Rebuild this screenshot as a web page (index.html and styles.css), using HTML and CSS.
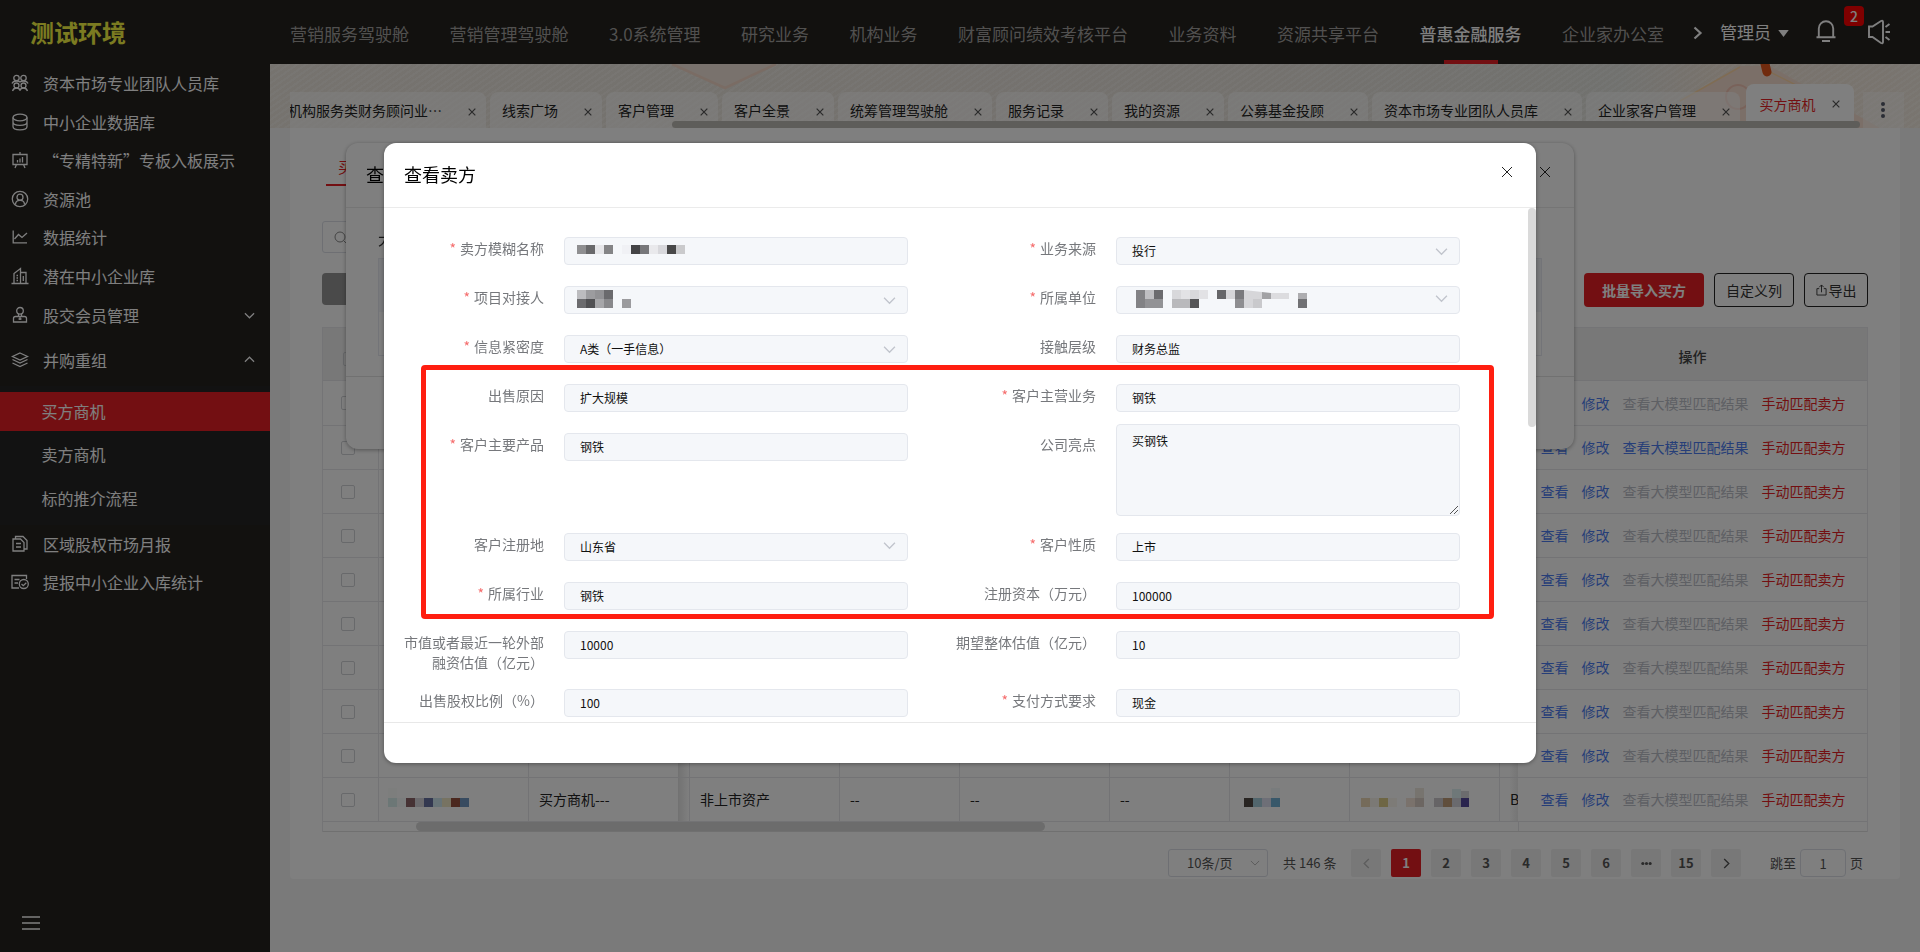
FILE: index.html
```html
<!DOCTYPE html>
<html lang="zh-CN">
<head>
<meta charset="utf-8">
<title>买方商机</title>
<link rel="stylesheet" href="styles.css">
</head>
<body>
<svg class="defs" width="0" height="0">
  <symbol id="x" viewBox="0 0 12 12"><path d="M1 1l10 10M11 1L1 11"/></symbol>
  <symbol id="down" viewBox="0 0 12 12"><path d="M1 3.5l5 5 5-5"/></symbol>
</svg>

<header class="header">
  <div class="logo">测试环境</div>
  <nav class="nav">
    <a>营销服务驾驶舱</a><a>营销管理驾驶舱</a><a>3.0系统管理</a><a>研究业务</a><a>机构业务</a><a>财富顾问绩效考核平台</a><a>业务资料</a><a>资源共享平台</a><a class="on">普惠金融服务</a><a>企业家办公室</a>
  </nav>
  <div class="tools">
    <svg class="nav-next" width="10" height="14" viewBox="0 0 10 14"><path d="M1.500 1.500L7.500 7l-6 5.500"/></svg>
    <span class="user">管理员</span>
    <svg class="caret" width="11" height="7" viewBox="0 0 12 8"><path d="M0 0h12L6 8z"/></svg>
    <span class="bell">
      <svg width="20" height="22" viewBox="0 0 20 22"><path d="M.5 17.300h19M2.800 17V8.500a7.200 7.200 0 0 1 14.400 0V17M6 21h8"/></svg>
      <b class="badge">2</b>
    </span>
    <svg class="speaker" width="24" height="26" viewBox="0 0 24 26"><path d="M2 7.500q0 0 3.500 0L14 2q2-1 2 1v20q0 2-2 1l-8.500-6H2zM18.500 8l4-3M18.500 13h4.500M18.500 18l4 3"/></svg>
  </div>
</header>

<div class="shell">
  <aside class="side">
    <div class="item"><svg viewBox="0 0 18 18"><circle cx="5.500" cy="4" r="2.700"/><circle cx="12.500" cy="4" r="2.700"/><circle cx="5.500" cy="11.500" r="2.500"/><circle cx="12.500" cy="11.500" r="2.500"/><path d="M1 9.500q1-2.500 4.500-2.500t3.500 1.500q0-1.500 3.500-1.500t4.500 2.500M1.500 17q1-3 4-3t3.500 2.500q.5-2.500 3.500-2.500t4 3"/></svg>资本市场专业团队人员库</div>
    <div class="item"><svg viewBox="0 0 18 18"><ellipse cx="9" cy="4.500" rx="7" ry="3.300"/><path d="M2 4.500v9c0 4.500 14 4.500 14 0v-9M2 9c0 4.500 14 4.500 14 0"/></svg>中小企业数据库</div>
    <div class="item"><svg viewBox="0 0 18 18"><path d="M2 3.500h14v10H2zM9 1v2.500M5.500 13.500L4 17M12.500 13.500L14 17M1.500 13.500h15M6.500 9v2.500M9 7.500v4M11.500 6v5.500"/></svg>“专精特新”专板入板展示</div>
    <div class="item"><svg viewBox="0 0 18 18"><circle cx="9" cy="9" r="7.700"/><circle cx="9" cy="7.200" r="3"/><path d="M4.500 14.500c0-5.500 9-5.500 9 0"/></svg>资源池</div>
    <div class="item"><svg viewBox="0 0 18 18"><path d="M2.200 2.500v12.300H16M3.500 11l4-4.500L11 9.500l5-4.500"/></svg>数据统计</div>
    <div class="item"><svg viewBox="0 0 18 18"><path d="M.5 16.500h17M3 16.500v-10l6.500-5v15M9.500 5.500h5.500v11M5.500 8.500h1.500M5.500 11h1.500M5.500 13.500h1.500M12.300 9v5"/></svg>潜在中小企业库</div>
    <div class="item h41"><svg viewBox="0 0 18 18"><circle cx="9" cy="4.800" r="3.300"/><path d="M2.500 16v-3.500q0-2 2-2h9q2 0 2 2v3.500zM7.500 8v2.500h3V8M9 10.500v3.500M7.500 13h3"/></svg>股交会员管理<svg class="arr" viewBox="0 0 12 12"><use href="#down"/></svg></div>
    <div class="item h49"><svg viewBox="0 0 18 18"><path d="M9 2l7.500 3.500L9 9 1.500 5.500zM1.500 8.500L9 12l7.500-3.500M1.500 12L9 15.500l7.500-3.500"/></svg>并购重组<svg class="arr up" viewBox="0 0 12 12"><use href="#down"/></svg></div>
    <div class="sub">
      <div class="leaf on">买方商机</div>
      <div class="leaf h48">卖方商机</div>
      <div class="leaf">标的推介流程</div>
    </div>
    <div class="item"><svg viewBox="0 0 18 18"><path d="M2 4h7.500l3.500 3.500V16H2zM4.500 4V1.500H12l4 4V14h-3M5 8.500h5M5 12h5"/></svg>区域股权市场月报</div>
    <div class="item"><svg viewBox="0 0 18 18"><path d="M8 15H1V2.500h14.500V6M3.500 6.500h5M3.500 10h3.500M1 15V2.500"/><circle cx="12.800" cy="11" r="4.500"/><path d="M10.500 11l1.800 1.700 3-3"/></svg>提报中小企业入库统计</div>
    <svg class="fold" width="18" height="14" viewBox="0 0 18 14"><path d="M0 1h18M0 7h18M0 13h18"/></svg>
  </aside>

  <main class="main">
    <div class="banner">
      <svg class="deco" width="1650" height="64" viewBox="0 0 1650 64">
        <path class="d1" d="M402 0h104l-51 24z"/><path class="d2" d="M402 0l53 24 51-24"/>
        <path class="d3" d="M1470 2L1415 34l-10 30h205L1500 2z"/>
        <path class="d4" d="M1470 3l-60 34M1500 8l80 40"/>
        <circle class="d5" cx="1468" cy="33" r="12"/>
        <path class="d6" d="M1495 0l2 8"/><path class="d7" d="M1433 62l30 2"/>
      </svg>
      <div class="tabs">
        <div class="tab first">机构服务类财务顾问业…<svg><use href="#x"/></svg></div>
        <div class="tab">线索广场<svg><use href="#x"/></svg></div>
        <div class="tab">客户管理<svg><use href="#x"/></svg></div>
        <div class="tab">客户全景<svg><use href="#x"/></svg></div>
        <div class="tab">统筹管理驾驶舱<svg><use href="#x"/></svg></div>
        <div class="tab">服务记录<svg><use href="#x"/></svg></div>
        <div class="tab">我的资源<svg><use href="#x"/></svg></div>
        <div class="tab">公募基金投顾<svg><use href="#x"/></svg></div>
        <div class="tab">资本市场专业团队人员库<svg><use href="#x"/></svg></div>
        <div class="tab">企业家客户管理<svg><use href="#x"/></svg></div>
        <div class="tab on">买方商机<svg><use href="#x"/></svg></div>
        <div class="more"><i></i><i></i><i></i></div>
      </div>
      <div class="tab-scroll"></div>
    </div>

    <section class="card">
      <div class="switch"><span>买方商机</span></div>
      <div class="search"><svg width="14" height="14" viewBox="0 0 14 14"><circle cx="6" cy="6" r="5"/><path d="M9.500 9.500L13 13"/></svg></div>
      <div class="bar">
        <button class="btn gray">删除</button>
        <span class="grow"></span>
        <button class="btn red">批量导入买方</button>
        <button class="btn line w80">自定义列</button>
        <button class="btn line w64"><svg width="11" height="12" viewBox="0 0 12 13"><path d="M3.500 5H1v7h10V5H8.500M6 9V1M3.500 3.500L6 1l2.500 2.500"/></svg>导出</button>
      </div>
      <div class="table">
        <div class="row head"><div class="chk"><i></i></div><div></div><div></div><div class="shade"></div><div></div><div></div><div></div><div></div><div></div><div></div><div class="edge"></div><div class="ops">操作</div></div>
        <div class="row r1"><div class="chk"><i></i></div><div></div><div></div><div class="shade"></div><div></div><div></div><div></div><div></div><div></div><div></div><div class="edge"></div><div class="ops"><a>查看</a><a>修改</a><a class="off">查看大模型匹配结果</a><a class="hot">手动匹配卖方</a></div></div>
        <div class="row"><div class="chk"><i></i></div><div></div><div></div><div class="shade"></div><div></div><div></div><div></div><div></div><div></div><div></div><div class="edge"></div><div class="ops"><a>查看</a><a>修改</a><a>查看大模型匹配结果</a><a class="hot">手动匹配卖方</a></div></div>
        <div class="row"><div class="chk"><i></i></div><div></div><div></div><div class="shade"></div><div></div><div></div><div></div><div></div><div></div><div></div><div class="edge"></div><div class="ops"><a>查看</a><a>修改</a><a class="off">查看大模型匹配结果</a><a class="hot">手动匹配卖方</a></div></div>
        <div class="row"><div class="chk"><i></i></div><div></div><div></div><div class="shade"></div><div></div><div></div><div></div><div></div><div></div><div></div><div class="edge"></div><div class="ops"><a>查看</a><a>修改</a><a class="off">查看大模型匹配结果</a><a class="hot">手动匹配卖方</a></div></div>
        <div class="row"><div class="chk"><i></i></div><div></div><div></div><div class="shade"></div><div></div><div></div><div></div><div></div><div></div><div></div><div class="edge"></div><div class="ops"><a>查看</a><a>修改</a><a class="off">查看大模型匹配结果</a><a class="hot">手动匹配卖方</a></div></div>
        <div class="row"><div class="chk"><i></i></div><div></div><div></div><div class="shade"></div><div></div><div></div><div></div><div></div><div></div><div></div><div class="edge"></div><div class="ops"><a>查看</a><a>修改</a><a class="off">查看大模型匹配结果</a><a class="hot">手动匹配卖方</a></div></div>
        <div class="row"><div class="chk"><i></i></div><div></div><div></div><div class="shade"></div><div></div><div></div><div></div><div></div><div></div><div></div><div class="edge"></div><div class="ops"><a>查看</a><a>修改</a><a class="off">查看大模型匹配结果</a><a class="hot">手动匹配卖方</a></div></div>
        <div class="row"><div class="chk"><i></i></div><div></div><div></div><div class="shade"></div><div></div><div></div><div></div><div></div><div></div><div></div><div class="edge"></div><div class="ops"><a>查看</a><a>修改</a><a class="off">查看大模型匹配结果</a><a class="hot">手动匹配卖方</a></div></div>
        <div class="row"><div class="chk"><i></i></div><div></div><div></div><div class="shade"></div><div></div><div></div><div></div><div></div><div></div><div></div><div class="edge"></div><div class="ops"><a>查看</a><a>修改</a><a class="off">查看大模型匹配结果</a><a class="hot">手动匹配卖方</a></div></div>
        <div class="row">
          <div class="chk"><i></i></div>
          <div><svg class="mosaic" width="82" height="19"><path fill="#fafcfb" d="M0 0h9v10H0z"/><path fill="#d9eeec" d="M0 10h9v9H0z"/><path fill="#f6fafa" d="M9 10h9v9H9z"/><path fill="#8c6468" d="M18 10h9v9h-9z"/><path fill="#d6d4da" d="M27 10h9v9h-9z"/><path fill="#6670a0" d="M36 10h9v9h-9z"/><path fill="#cfe6ee" d="M45 10h9v9h-9z"/><path fill="#eee6c4" d="M54 10h9v9h-9z"/><path fill="#96503e" d="M63 10h9v9h-9z"/><path fill="#7096c0" d="M72 10h9v9h-9z"/></svg></div>
          <div>买方商机---</div><div class="shade"></div><div>非上市资产</div><div>--</div><div>--</div><div>--</div>
          <div class="m2"><svg class="mosaic" width="37" height="19"><path fill="#f2f8fa" d="M27 0h9v10h-9z"/><path fill="#504844" d="M0 10h9v9H0z"/><path fill="#a4ccda" d="M9 10h9v9H9z"/><path fill="#dcdfee" d="M18 10h9v9h-9z"/><path fill="#70b0d4" d="M27 10h9v9h-9z"/></svg></div>
          <div><svg class="mosaic m3" width="110" height="19"><path fill="#efe9de" d="M54 0h9v10h-9z"/><path fill="#def0f2" d="M91 1h9v9h-9z"/><path fill="#d8d8dc" d="M100 3h8v7h-8z"/><path fill="#ead6b4" d="M0 10h9v9H0z"/><path fill="#f6f2ea" d="M9 10h9v9H9z"/><path fill="#dccc88" d="M18 10h9v9h-9z"/><path fill="#fbf7ee" d="M27 10h9v9h-9z"/><path fill="#f4e4d8" d="M45 10h9v9h-9z"/><path fill="#d8ccc4" d="M54 10h9v9h-9z"/><path fill="#ccc8cc" d="M73 10h9v9h-9z"/><path fill="#c09c78" d="M82 10h9v9h-9z"/><path fill="#d4d4dc" d="M91 10h9v9h-9z"/><path fill="#54489c" d="M100 10h8v9h-8z"/></svg></div>
          <div class="edge">B</div>
          <div class="ops"><a>查看</a><a>修改</a><a class="off">查看大模型匹配结果</a><a class="hot">手动匹配卖方</a></div>
        </div>
        <div class="hscroll"><i></i><b></b></div>
      </div>
      <div class="pager">
        <span class="size">10条/页<svg><use href="#down"/></svg></span>
        <span class="total">共 146 条</span>
        <span class="pg dim"><svg class="l"><use href="#down"/></svg></span><span class="pg on">1</span><span class="pg">2</span><span class="pg">3</span><span class="pg">4</span><span class="pg">5</span><span class="pg">6</span><span class="pg"><svg class="dots" viewBox="0 0 12 12"><circle cx="2" cy="6" r="1.700"/><circle cx="6" cy="6" r="1.700"/><circle cx="10" cy="6" r="1.700"/></svg></span><span class="pg">15</span><span class="pg"><svg class="r"><use href="#down"/></svg></span>
        <span class="jump">跳至</span><span class="num">1</span><span>页</span>
      </div>
    </section>
  </main>
</div>

<div class="layer">
  <div class="dlg back">
    <div class="dlg-head">查看匹配<svg><use href="#x"/></svg></div>
    <div class="back-body"><p>大模型匹配结果</p><div class="mini"><i></i></div></div>
  </div>
</div>
<div class="layer mask">
  <div class="dlg front">
    <div class="dlg-head">查看卖方<svg><use href="#x"/></svg></div>
    <div class="form">
      <div class="f"><label class="req">卖方模糊名称</label><div class="in mz"><svg width="108" height="9"><path fill="#8f8f91" d="M0 0h9v9H0z"/><path fill="#69696b" d="M9 0h9v9H9z"/><path fill="#e6e6e9" d="M18 0h9v9h-9z"/><path fill="#848486" d="M27 0h9v9h-9z"/><path fill="#f0f1f5" d="M45 0h9v9h-9z"/><path fill="#444446" d="M54 0h9v9h-9z"/><path fill="#77777a" d="M63 0h9v9h-9z"/><path fill="#e9e9ec" d="M72 0h9v9h-9z"/><path fill="#d8d8dc" d="M81 0h9v9h-9z"/><path fill="#484848" d="M90 0h9v9h-9z"/><path fill="#cacacc" d="M99 0h9v9h-9z"/></svg></div></div>
      <div class="f"><label class="req">业务来源</label><div class="in">投行<svg class="sel"><use href="#down"/></svg></div></div>
      <div class="f"><label class="req">项目对接人</label><div class="in mz"><svg width="72" height="18"><path fill="#bcbcbf" d="M0 0h9v9H0z"/><path fill="#9c9c9f" d="M9 0h9v9H9z"/><path fill="#929295" d="M18 0h9v9h-9z"/><path fill="#6a6a6d" d="M27 0h9v9h-9z"/><path fill="#6b6b6e" d="M0 9h9v9H0z"/><path fill="#505053" d="M9 9h9v9H9z"/><path fill="#a6a6a9" d="M18 9h9v9h-9z"/><path fill="#88888b" d="M27 9h9v9h-9z"/><path fill="#9b9b9e" d="M45 9h9v9h-9z"/></svg><svg class="sel"><use href="#down"/></svg></div></div>
      <div class="f"><label class="req">所属单位</label><div class="in mz wide"><svg width="175" height="18"><path fill="#828285" d="M0 0h9v18H0z"/><path fill="#bfbfc2" d="M9 0h9v9H9z"/><path fill="#6b6b6e" d="M18 0h9v9h-9z"/><path fill="#929295" d="M9 9h18v9H9z"/><path fill="#d8d8db" d="M36 0h9v9h-9zM54 0h9v9h-9z"/><path fill="#e2e2e5" d="M45 0h9v9h-9zM63 0h9v9h-9z"/><path fill="#b9b9bc" d="M36 9h18v9H36z"/><path fill="#555557" d="M54 9h9v9h-9z"/><path fill="#666669" d="M81 0h9v9h-9z"/><path fill="#d6d6d9" d="M90 0h9v9h-9z"/><path fill="#7a7a7d" d="M99 0h9v9h-9z"/><path fill="#8e8e91" d="M99 9h9v9h-9z"/><path fill="#d6d6d9" d="M108 0l18 2v7h-9v9h-9z"/><path fill="#c9c9cc" d="M117 9h9v9h-9z"/><path fill="#a2a2a5" d="M126 2l9 1v6h-9z"/><path fill="#dcdcdf" d="M135 3h18v6h-18z"/><path fill="#adadb0" d="M162 3h9v6h-9z"/><path fill="#717174" d="M162 9h9v9h-9z"/></svg><svg class="sel hi"><use href="#down"/></svg></div></div>
      <div class="f"><label class="req">信息紧密度</label><div class="in">A类（一手信息）<svg class="sel"><use href="#down"/></svg></div></div>
      <div class="f"><label>接触层级</label><div class="in">财务总监</div></div>
      <div class="f"><label>出售原因</label><div class="in">扩大规模</div></div>
      <div class="f"><label class="req">客户主营业务</label><div class="in">钢铁</div></div>
      <div class="f"><label class="req">客户主要产品</label><div class="in">钢铁</div></div>
      <div class="f"><label>公司亮点</label><div class="in area">买钢铁<svg class="grip" width="8" height="8" viewBox="0 0 8 8"><path d="M0 8l8-8M4 8l4-4"/></svg></div></div>
      <div class="f"><label>客户注册地</label><div class="in">山东省<svg class="sel hi"><use href="#down"/></svg></div></div>
      <div class="f"><label class="req">客户性质</label><div class="in">上市</div></div>
      <div class="f"><label class="req">所属行业</label><div class="in">钢铁</div></div>
      <div class="f"><label>注册资本（万元）</label><div class="in">100000</div></div>
      <div class="f"><label>市值或者最近一轮外部融资估值（亿元）</label><div class="in">10000</div></div>
      <div class="f"><label>期望整体估值（亿元）</label><div class="in">10</div></div>
      <div class="f"><label>出售股权比例（%）</label><div class="in">100</div></div>
      <div class="f"><label class="req">支付方式要求</label><div class="in">现金</div></div>
      <div class="vscroll"></div>
    </div>
    <div class="frame"></div>
  </div>
</div>
</body>
</html>
```
FILE: styles.css
```css
* { box-sizing: border-box; }
body {
  margin: 0;
  width: 1920px;
  height: 952px;
  overflow: hidden;
  background: #f5f5f5;
  font: 14px/20px "Noto Sans CJK SC", "Noto Sans", sans-serif;
  color: #333;
}
svg { fill: none; stroke: currentColor; }
.defs { position: absolute; }

/* top bar */
.header { display: flex; height: 64px; background: #24221f; color: #fff; }
.logo { width: 270px; padding: 15px 0 0 30px; font-size: 24px; line-height: 34px; font-weight: 700; color: #f6f642; }
.nav { display: flex; gap: 40.5px; width: 1402px; padding-left: 20px; font-size: 17px; line-height: 68px; color: #a3a19f; white-space: nowrap; }
.nav .on { color: #fff; font-weight: 500; height: 64px; background: linear-gradient(#e61f24, #e61f24) center bottom / 54px 4px no-repeat; }
.tools { display: flex; align-items: center; height: 64px; padding-left: 21px; font-size: 17px; }
.nav-next { stroke-width: 2.200; margin-top: 2px; }
.user { margin-left: 17px; line-height: 64px; }
.caret { fill: #fff; stroke: none; margin: 3px 0 0 7px; }
.bell { position: relative; display: flex; margin-left: 27px; margin-bottom: 2px; }
.bell svg, .speaker { stroke-width: 1.900; }
.badge { position: absolute; left: 28px; top: -14px; width: 20px; height: 20px; border-radius: 4px; background: #ff0000; font: 500 14px/20px "Noto Sans CJK SC", sans-serif; text-align: center; }
.speaker { margin-left: 31px; }

/* side menu */
.shell { display: flex; height: 888px; }
.side { display: flex; flex-direction: column; width: 270px; background: #24221f; color: #fff; font-size: 16px; }
.item { display: flex; align-items: center; flex: none; height: 38.5px; padding: 0 14px 0 11px; }
.item svg { width: 18px; height: 18px; margin-right: 14px; stroke-width: 1.300; }
.h41 { height: 40px; }
.item.h49 { height: 49px; margin-bottom: 2px; }
.item .arr { width: 11px; height: 11px; margin: 0 1px 0 auto; }
.up { transform: rotate(180deg); }
.sub { padding-top: 6px; height: 138.5px; background: #242424; }
.leaf { height: 39px; line-height: 38px; padding-left: 41.5px; }
.leaf.on { background: #e61f24; }
.leaf.h48 { height: 48px; line-height: 47px; }
.fold { margin: auto 0 22px 22px; stroke-width: 1.700; }

/* banner and page tabs */
.main { width: 1650px; }
.banner {
  display: grid;
  height: 64px;
  background:
    repeating-linear-gradient(145deg, rgba(255,255,255,.12) 0 2px, rgba(200,190,170,.08) 2px 5px),
    linear-gradient(90deg, #efeae2, #ece7e1 60%, #e6e7e3 82%, #f6e9dc 88%, #f6eee4);
}
.banner > * { grid-area: 1 / 1; }
.deco { stroke: none; }
.d1 { fill: #f3e5da; } .d2 { stroke: #f4d8c8; stroke-width: 2.500; fill: none; }
.d3 { fill: #f7dfd1; } .d4 { stroke: #ffd9a8; stroke-width: 1.500; }
.d5 { stroke: #f3c4b4; stroke-width: 2; }
.d6, .d7 { stroke: #e2561c; stroke-width: 9; stroke-linecap: round; }
.d7 { stroke-width: 3; }
.tabs { display: flex; align-items: flex-end; gap: 4px; width: 1614px; height: 64px; margin-left: 20px; overflow: hidden; font-size: 14px; }
.tab { display: flex; align-items: center; flex: none; height: 36px; padding: 0 10.5px 0 12px; border-radius: 8px 8px 0 0; background: rgba(255,255,255,.55); color: #222; }
.tab.first { margin-left: -15px; padding-left: 13px; }
.tab svg { width: 8px; height: 8px; margin: 4px 0 0 25.500px; stroke: #555; stroke-width: 1.800; }
.tab.on { height: 44px; margin-left: 1.500px; padding: 0 14px 5px 14px; background: #fff; color: #e61f24; }
.tab.on svg { margin: 1px 0 0 16px; }
.more { display: flex; flex-direction: column; align-items: center; justify-content: center; gap: 2px; width: 42px; height: 36px; margin-left: 5px; background: rgba(255,255,255,.4); }
.more i { width: 4px; height: 4px; border-radius: 50%; background: #555a6a; }
.tab-scroll { align-self: end; width: 1188px; height: 7px; margin-left: 402px; border-radius: 4px; background: #bdbab5; position: relative; }

/* content card */
.card { width: 1610px; height: 751px; margin-left: 20px; padding: 23px 32px 0; background: #fff; border-radius: 0 0 4px 4px; }
.switch { height: 35px; padding-left: 4px; color: #e61f24; font-size: 15px; line-height: 31px; }
.switch span { display: inline-block; height: 35px; padding: 0 12px; border-bottom: 2px solid #e61f24; }
.search { width: 300px; height: 32px; margin-top: 35px; padding: 7px 11px; border: 1px solid #dcdfe6; border-radius: 3px; color: #888; }
.bar { display: flex; height: 34px; margin-top: 20px; }
.grow { flex: 1; }
.btn { display: flex; align-items: center; justify-content: center; height: 34px; margin: 0 0 0 10px; padding: 0; border: 0; border-radius: 4px; font: 14px/20px "Noto Sans CJK SC", sans-serif; background: none; color: #333; }
.btn.gray { width: 80px; height: 32px; margin-left: 0; background: #949494; color: #ddd; font-size: 15px; }
.btn.red { width: 120px; padding-bottom: 1px; background: #e61f24; color: #fff; font-weight: 700; }
.btn.line { border: 1px solid #222; }
.btn svg { margin-right: 2px; }
.w80 { width: 80px; }
.w64 { width: 64px; }

/* table */
.table { margin-top: 20px; width: 1546px; border: solid #e9e9ec; border-width: 1px 1px 0 1px; }
.row { display: grid; grid-template-columns: 55px 150px 150px 11px 150px 120px 150px 120px 120px 150px 19px 349px; height: 44px; border-bottom: 1px solid #e6e6ea; line-height: 43px; }
.row > div { border-left: 1px solid #e6e6ea; padding-left: 10px; overflow: hidden; white-space: nowrap; color: #222; }
.row > .chk { border-left: 0; padding: 15px 0 0 18px; }
.chk i { display: block; width: 14px; height: 14px; border: 1px solid #d0d2d6; border-radius: 2px; }
.row > .shade { border: 0; background: linear-gradient(90deg, #e4e4e4, #fff); }
.row > .edge { background: linear-gradient(90deg, #fff 50%, #ececec); }
.row > .ops { display: flex; gap: 13px; padding-left: 22.5px; border-left: 0; }
.ops a { color: #4d7df0; }
.ops .off { color: #bcc0c8; }
.ops .hot { color: #e61f24; }
.row.head { height: 53px; background: #f0f0f0; line-height: 57px; }
.row.head > .chk { padding: 24px 0 0 20px; }
.row.head > .ops { justify-content: center; padding: 0; font-weight: 500; color: #444; }
.row.head > .shade, .row.head > .edge { background: none; }
.row.r1 { height: 45px; line-height: 44px; }
.mosaic { display: block; margin: 10px 0 0 -1px; stroke: none; }
.m2 .mosaic { margin-left: 4px; }
.mosaic.m3 { margin-left: 1px; }
.hscroll { display: flex; height: 10px; border-bottom: 1px solid #e0e0e0; }
.hscroll i { width: 629px; margin-left: 93px; border-radius: 5px; background: #d8d8d8; }
.hscroll b { width: 1px; margin-left: 473px; background: #e6e6ea; }

/* pagination */
.pager { display: flex; align-items: center; height: 28px; margin-top: 17px; padding-left: 846px; font-size: 13px; color: #555; white-space: nowrap; }
.size { display: flex; align-items: center; justify-content: space-between; width: 100px; height: 28px; padding: 0 7px 0 18px; border: 1px solid #dcdfe6; border-radius: 3px; }
.size svg { width: 10px; height: 10px; color: #aaa; }
.total { width: 68px; margin: 0 0 0 15px; }
.pg { display: flex; align-items: center; justify-content: center; width: 30px; height: 28px; margin-right: 10px; background: #f0f0f1; border-radius: 2px; font-weight: 700; }
.pg svg { width: 11px; height: 11px; stroke-width: 1.500; }
.pg .dots { fill: #555; stroke: none; }
.pg .l { transform: rotate(90deg); }
.pg .r { transform: rotate(-90deg); }
.pg.dim { color: #bbb; }
.pg.on { background: #e61f24; color: #fff; }
.jump { margin-left: 19px; }
.num { width: 46px; height: 28px; margin: 0 4px; border: 1px solid #dcdfe6; border-radius: 4px; line-height: 28px; text-align: center; }

/* dialogs */
.layer { position: fixed; inset: 0; display: flex; justify-content: center; align-items: flex-start; padding-top: 143px; }
.mask { background: rgba(0,0,0,.5); }
.dlg { position: relative; background: #fff; border-radius: 12px; box-shadow: 0 1px 4px rgba(0,0,0,.35); overflow: hidden; }
.dlg-head { display: flex; justify-content: space-between; height: 65px; padding: 0 23px 0 20px; border-bottom: 1px solid #ebebeb; font-size: 18px; line-height: 63px; color: #000; }
.dlg-head svg { width: 12px; height: 12px; margin-top: 23px; color: #222; }
.back { width: 1228px; height: 306px; }
.back-body { height: 169px; padding: 21px 32px 0; border-bottom: 1px solid #e2e2e2; }
.back-body p { margin: 0; line-height: 20px; font-size: 15px; }
.mini { height: 98px; margin-top: 9px; border: 1px solid #e6e8f0; }
.mini i { display: block; height: 53px; background: #f3f4f8; }
.front { width: 1152px; height: 620px; }
.form {
  position: relative;
  display: grid;
  grid-template-columns: 552px 552px;
  grid-template-rows: 49px 49px 49px 49px 100px 49px 49px 58px 33px;
  height: 515px;
  padding-top: 29px;
  border-bottom: 1px solid #e8e8e8;
  overflow: hidden;
}
.f { display: flex; align-items: flex-start; }
.f label { width: 160px; padding: 1px 0 0 20px; line-height: 20px; text-align: right; color: #76787c; }
.req::before { content: "*"; margin-right: 4px; color: #f56c6c; }
.in { position: relative; width: 344px; height: 28px; margin-left: 20px; padding-left: 15px; border: 1px solid #e4e7ed; border-radius: 4px; background: #f5f7fa; font-size: 12px; line-height: 26px; color: #111; }
.in.area { height: 92px; margin-top: -9px; line-height: 32px; }
.mz { padding: 4px 0 0 12px; }
.mz > svg:first-child { display: block; margin-top: 3px; stroke: none; }
.mz > svg[height="18"]:first-child { margin-top: -1px; }
.mz.wide { padding-left: 19px; }
.in .sel { position: absolute; right: 11px; top: 7px; width: 13px; height: 13px; color: #c0c4cc; stroke-width: 1.200; }
.in .sel.hi { top: 5px; }
.grip { position: absolute; right: 1px; bottom: 1px; color: #555; }
.vscroll { position: absolute; right: 0; top: 0; width: 8px; height: 219px; border-radius: 4px; background: #dadada; }
.frame { position: absolute; left: 36.500px; top: 222px; width: 1073px; height: 254px; border: 5px solid #ff1e10; border-radius: 4px; }
```
